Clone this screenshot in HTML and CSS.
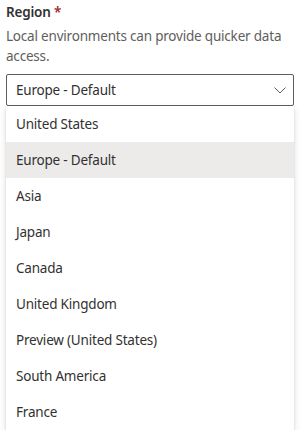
FILE: index.html
```html
<!DOCTYPE html>
<html lang="en">
<head>
    <meta charset="UTF-8">
    <meta name="viewport" content="width=device-width, initial-scale=1.0">
    <title>Region</title>
    <link rel="stylesheet" href="styles.css">
</head>
<body>
    <div class="field">
        <label class="label">Region <span class="required">*</span></label>
        <p class="description">Local environments can provide quicker data access.</p>
        <div class="dropdown">
            <span class="dropdown-title">Europe - Default</span>
            <svg class="chevron" width="12" height="7" viewBox="0 0 12 7">
                <path d="M0.5 0.5 L6 6 L11.5 0.5" fill="none" stroke="#605e5c" stroke-width="1"/>
            </svg>
        </div>
        <ul class="options">
            <li class="option">United States</li>
            <li class="option selected">Europe - Default</li>
            <li class="option">Asia</li>
            <li class="option">Japan</li>
            <li class="option">Canada</li>
            <li class="option">United Kingdom</li>
            <li class="option">Preview (United States)</li>
            <li class="option">South America</li>
            <li class="option">France</li>
        </ul>
    </div>
</body>
</html>
```

FILE: styles.css
```css
body {
    margin: 0;
    padding: 0 6px;
    font-family: "Noto Sans", "Open Sans", sans-serif;
    font-size: 13.5px;
    letter-spacing: -0.2px;
    color: #323130;
    background: #ffffff;
    overflow: hidden;
}

.field {
    width: 288px;
}

.label {
    display: block;
    margin-top: 2px;
    line-height: 20px;
    font-weight: 600;
    color: #323130;
}

.required {
    color: #a4262c;
}

.description {
    margin: 4px 0 0;
    line-height: 20px;
    color: #605e5c;
}

.dropdown {
    margin-top: 8px;
    height: 32px;
    box-sizing: border-box;
    border: 1px solid #605e5c;
    border-radius: 2px;
    display: flex;
    align-items: center;
    justify-content: space-between;
    padding: 0 7px 0 9px;
}

.dropdown-title {
    line-height: 30px;
}

.chevron {
    display: block;
}

.options {
    list-style: none;
    margin: 0;
    padding: 0;
    background: #ffffff;
    box-shadow: 0 3px 7px rgba(0, 0, 0, 0.13), 0 0.6px 2px rgba(0, 0, 0, 0.11);
}

.option {
    height: 36px;
    line-height: 36px;
    padding: 0 10px;
    color: #323130;
}

.option.selected {
    background: #edebe9;
}
```
